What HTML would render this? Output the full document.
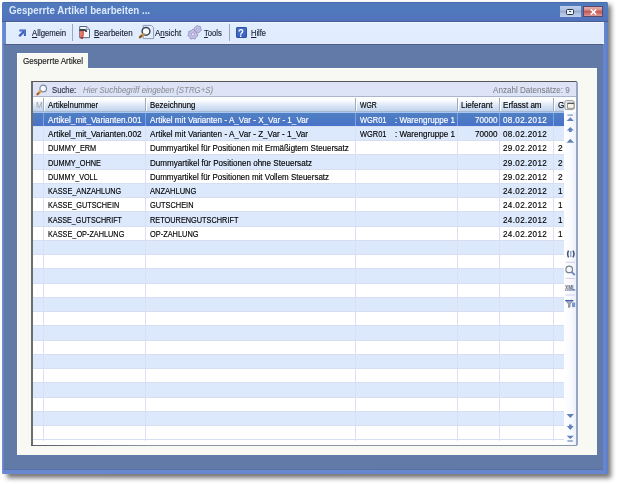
<!DOCTYPE html>
<html><head><meta charset="utf-8">
<style>
*{margin:0;padding:0;box-sizing:border-box}
html,body{width:618px;height:484px;overflow:hidden;background:#fff;font-family:"Liberation Sans",sans-serif}
.a{position:absolute}
.t{position:absolute;white-space:pre;line-height:12px}
svg{position:absolute;overflow:visible}
</style></head><body>
<div class="a" style="left:7px;top:5px;width:603.5px;height:472.5px;background:rgba(0,0,0,.55);filter:blur(2.5px)"></div>
<div class="a" style="left:2px;top:2px;width:605.5px;height:471.5px;background:linear-gradient(90deg,#7294da,#6888d0 1.5px,#6686d0 calc(100% - 4px),#6282cc calc(100% - 1px),#5a7ac0);border-radius:2px 2px 1px 1px"></div>
<div class="a" style="left:2px;top:2px;width:605.5px;height:20px;background:linear-gradient(#40609e 0,#507abc 1px,#5078bc 50%,#5272bc 18.5px,#44629e 19px,#485a8c 20px);border-radius:2px 2px 0 0"></div>
<div class="t" style="left:9.00px;top:4.16px;font-size:10.5px;color:#dce8fc;font-weight:bold;font-style:normal;transform:scaleX(0.925);transform-origin:0 0;">Gesperrte Artikel bearbeiten ...</div>
<div class="a" style="left:559.8px;top:5.9px;width:21.5px;height:11px;background:linear-gradient(#bcd0ec,#aec2e0 35%,#98acc8 50%,#aabede 65%,#bcd0ec);"></div>
<div class="a" style="left:566px;top:8.5px;width:8.2px;height:6px;background:#e8eef6;border:1.6px solid #28324a;border-radius:1.5px"></div>
<div class="a" style="left:568.5px;top:10.6px;width:2.5px;height:1.5px;background:#3a4660;"></div>
<div class="a" style="left:582.5px;top:5.9px;width:20.8px;height:11.2px;background:linear-gradient(#e6b4b4,#dc9a98 30%,#c65a56 50%,#cc6c68 65%,#e2aaaa);box-shadow:inset 0 0 0 1px #5a4a68"></div>
<svg style="left:589.5px;top:8.8px" width="7" height="6" viewBox="0 0 7 6"><path d="M0.8 0.5 L6.2 5.5 M6.2 0.5 L0.8 5.5" stroke="#fff" stroke-width="1.7"/></svg>
<div class="a" style="left:6px;top:22px;width:598px;height:22px;background:linear-gradient(#f6fbff 0,#e2eefe 1.5px,#e0ecfd);border-bottom:1px solid #fff"></div>
<div class="a" style="left:4.3px;top:44px;width:599.2px;height:425px;background:#627aa8;box-shadow:-1px 0 1px #6a84c0,0 1px 0 #5a6c9c"></div>
<div class="a" style="left:4.3px;top:44px;width:599.2px;height:1px;background:#4c5f8c;"></div>
<svg style="left:14px;top:24px" width="16" height="16" viewBox="0 0 16 16"><path d="M5.4 6.6 H10.9 V12" fill="none" stroke="#3558b8" stroke-width="2"/><path d="M10.4 7.1 L5.2 12.3" stroke="#3d5fc0" stroke-width="2.3"/><path d="M6 6.4 H10.6 V10.6" fill="none" stroke="#6e90e8" stroke-width="0.6"/></svg>
<div class="t" style="left:32.30px;top:27.02px;font-size:8.6px;color:#1a2030;font-weight:normal;font-style:normal;transform:scaleX(0.905);transform-origin:0 0;-webkit-text-stroke:0.15px currentColor;"><u>A</u>llgemein</div>
<div class="a" style="left:72px;top:24px;width:1px;height:17px;background:#9aa8bc;"></div>
<svg style="left:74px;top:22px" width="20" height="20" viewBox="0 0 20 20"><path d="M5.7 4.5 H12.8 L15.5 7.2 V15.7 H5.7 Z" fill="#f4f7fc" stroke="#56668a" stroke-width="1"/><path d="M12.6 4.7 V7.4 H15.3" fill="#dde6f2" stroke="#7a8aa6" stroke-width="0.8"/><path d="M5.4 8 H10.8 Q12.2 8 12.2 10" fill="none" stroke="#3c4452" stroke-width="1.8"/><path d="M5.6 9 H10 Q10.6 13 8.8 16.2 Q7.8 17 6.8 16 Q5 12.6 5.6 9 Z" fill="#d86a56"/><path d="M6.6 15.4 Q7.8 17 9 15.4" fill="none" stroke="#7a2418" stroke-width="1.3"/><path d="M7 10 V13.5" stroke="#f0a090" stroke-width="0.8"/></svg>
<div class="t" style="left:93.60px;top:27.02px;font-size:8.6px;color:#1a2030;font-weight:normal;font-style:normal;transform:scaleX(0.93);transform-origin:0 0;-webkit-text-stroke:0.15px currentColor;"><u>B</u>earbeiten</div>
<svg style="left:134px;top:22px" width="22" height="20" viewBox="0 0 22 20"><path d="M9.2 3.4 H17.3 L19.6 5.7 V16.6 H9.2 Z" fill="#e4eef9" stroke="#8c9cba" stroke-width="1"/><circle cx="12" cy="9.3" r="3.9" fill="#f4faff" stroke="#3e4654" stroke-width="1.5"/><circle cx="11.3" cy="8.6" r="1.6" fill="#fff"/><path d="M9.4 12.2 L6.2 15" stroke="#c8944c" stroke-width="2.8" stroke-linecap="round"/><path d="M7.4 14 L5.9 15.3" stroke="#7a5430" stroke-width="1.8" stroke-linecap="round"/></svg>
<div class="t" style="left:155.20px;top:27.02px;font-size:8.6px;color:#1a2030;font-weight:normal;font-style:normal;transform:scaleX(0.93);transform-origin:0 0;-webkit-text-stroke:0.15px currentColor;">A<u>n</u>sicht</div>
<svg style="left:184px;top:22px" width="20" height="20" viewBox="0 0 20 20"><path d="M13.77,12.95 L13.53,14.02 L12.39,14.59 L11.81,15.31 L11.51,16.55 L10.52,17.03 L9.36,16.49 L8.44,16.49 L7.28,17.03 L6.29,16.55 L5.99,15.31 L5.41,14.59 L4.27,14.02 L4.03,12.95 L4.81,11.94 L5.01,11.04 L4.75,9.79 L5.44,8.94 L6.71,8.91 L7.54,8.51 L8.35,7.53 L9.45,7.53 L10.26,8.51 L11.09,8.91 L12.36,8.94 L13.05,9.79 L12.79,11.04 L12.99,11.94 Z" fill="#c4c0e6" stroke="#8c88bc" stroke-width="0.9" stroke-linejoin="round"/><circle cx="8.9" cy="12.4" r="1.6" fill="#eeeef8" stroke="#8884bc" stroke-width="0.7"/><path d="M17.37,7.67 L17.13,8.58 L16.20,9.04 L15.64,9.60 L15.18,10.53 L14.27,10.77 L13.41,10.20 L12.64,9.99 L11.61,10.06 L10.94,9.39 L11.01,8.36 L10.80,7.59 L10.23,6.73 L10.47,5.82 L11.40,5.36 L11.96,4.80 L12.42,3.87 L13.33,3.63 L14.19,4.20 L14.96,4.41 L15.99,4.34 L16.66,5.01 L16.59,6.04 L16.80,6.81 Z" fill="#ccc8ec" stroke="#8c88bc" stroke-width="0.9" stroke-linejoin="round"/><circle cx="13.8" cy="7.2" r="1.2" fill="#eeeef8" stroke="#8884bc" stroke-width="0.7"/></svg>
<div class="t" style="left:203.90px;top:27.02px;font-size:8.6px;color:#1a2030;font-weight:normal;font-style:normal;transform:scaleX(0.89);transform-origin:0 0;-webkit-text-stroke:0.15px currentColor;"><u>T</u>ools</div>
<div class="a" style="left:229px;top:24px;width:1px;height:17px;background:#9aa8bc;"></div>
<div class="a" style="left:235.5px;top:27px;width:11.5px;height:11px;background:linear-gradient(#4a70c8,#3a62c0);border-radius:2px;box-shadow:inset 0 0 0 1px #2a50a8"></div>
<div class="t" style="left:238.20px;top:27.54px;font-size:10px;color:#fff;font-weight:bold;font-style:normal;transform:scaleX(0.95);transform-origin:0 0;">?</div>
<div class="t" style="left:250.50px;top:27.02px;font-size:8.6px;color:#1a2030;font-weight:normal;font-style:normal;transform:scaleX(0.87);transform-origin:0 0;-webkit-text-stroke:0.15px currentColor;"><u>H</u>ilfe</div>
<div class="a" style="left:17px;top:53px;width:71px;height:16px;background:#f9f9f4;"></div>
<div class="a" style="left:17px;top:53px;width:71px;height:1px;background:#ffffff;"></div>
<div class="a" style="left:17px;top:53px;width:1px;height:16px;background:#ffffff;"></div>
<div class="t" style="left:22.80px;top:54.82px;font-size:8.6px;color:#202020;font-weight:normal;font-style:normal;transform:scaleX(0.94);transform-origin:0 0;-webkit-text-stroke:0.15px currentColor;">Gesperrte Artikel</div>
<div class="a" style="left:17px;top:68px;width:579.5px;height:386.7px;background:#f9f9f4;"></div>
<div class="a" style="left:88px;top:68px;width:508px;height:1px;background:#ffffff;"></div>
<div class="a" style="left:17px;top:68px;width:1px;height:386px;background:#ffffff;"></div>
<div class="a" style="left:31px;top:81px;width:546px;height:364.5px;background:#fff;border-left:2px solid #6d6d6d;border-top:1px solid #555;border-right:1px solid #8a9abc;border-bottom:1px solid #8a94ac"></div>
<div class="a" style="left:31px;top:444.5px;width:120px;height:1px;background:linear-gradient(90deg,#5a5e6a,#8a94ac);"></div>
<div class="a" style="left:33px;top:82px;width:543px;height:15px;background:linear-gradient(#dfe2f6,#dce4f6);border-bottom:1px solid #aab6cc"></div>
<svg style="left:34px;top:82px" width="14" height="14" viewBox="0 0 14 14"><circle cx="9.2" cy="6.5" r="3.3" fill="#f2f8ff" stroke="#7c8ca8" stroke-width="1.2"/><circle cx="8.6" cy="5.9" r="1.3" fill="#fff"/><path d="M6.6 9.1 L3.6 12.2" stroke="#d89850" stroke-width="2.6" stroke-linecap="round"/><path d="M4.6 11.2 L3.4 12.4" stroke="#9a5a38" stroke-width="1.6" stroke-linecap="round"/></svg>
<div class="t" style="left:52.00px;top:83.62px;font-size:8.6px;color:#303440;font-weight:normal;font-style:normal;transform:scaleX(0.9);transform-origin:0 0;-webkit-text-stroke:0.15px currentColor;">Suche:</div>
<div class="t" style="left:82.60px;top:83.69px;font-size:8.4px;color:#8a8e96;font-weight:normal;font-style:italic;transform:scaleX(0.94);transform-origin:0 0;-webkit-text-stroke:0.05px currentColor;">Hier Suchbegriff eingeben (STRG+S)</div>
<div class="t" style="left:493.20px;top:83.62px;font-size:8.6px;color:#7a7e86;font-weight:normal;font-style:normal;transform:scaleX(0.94);transform-origin:0 0;-webkit-text-stroke:0.05px currentColor;">Anzahl Datensätze: 9</div>
<div class="a" style="left:33px;top:97px;width:531px;height:15px;background:linear-gradient(#ffffff,#fbfcff 25%,#dfe9f7 55%,#c0d4ee);border-bottom:1px solid #a6b6ce"></div>
<div class="t" style="left:35.60px;top:99.02px;font-size:8.6px;color:#a0a4aa;font-weight:normal;font-style:normal;transform:scaleX(0.94);transform-origin:0 0;">M</div>
<div class="a" style="left:43px;top:98px;width:1.2px;height:13px;background:#a0acbc;box-shadow:1px 0 0 #fff"></div>
<div class="a" style="left:145px;top:98px;width:1.2px;height:13px;background:#a0acbc;box-shadow:1px 0 0 #fff"></div>
<div class="a" style="left:355px;top:98px;width:1.2px;height:13px;background:#a0acbc;box-shadow:1px 0 0 #fff"></div>
<div class="a" style="left:456.5px;top:98px;width:1.2px;height:13px;background:#a0acbc;box-shadow:1px 0 0 #fff"></div>
<div class="a" style="left:498.5px;top:98px;width:1.2px;height:13px;background:#a0acbc;box-shadow:1px 0 0 #fff"></div>
<div class="a" style="left:552.5px;top:98px;width:1.2px;height:13px;background:#a0acbc;box-shadow:1px 0 0 #fff"></div>
<div class="t" style="left:47.80px;top:99.02px;font-size:8.6px;color:#000;font-weight:normal;font-style:normal;transform:scaleX(0.904);transform-origin:0 0;-webkit-text-stroke:0.15px currentColor;">Artikelnummer</div>
<div class="t" style="left:149.70px;top:99.02px;font-size:8.6px;color:#000;font-weight:normal;font-style:normal;transform:scaleX(0.913);transform-origin:0 0;-webkit-text-stroke:0.15px currentColor;">Bezeichnung</div>
<div class="t" style="left:359.70px;top:99.02px;font-size:8.6px;color:#000;font-weight:normal;font-style:normal;transform:scaleX(0.8);transform-origin:0 0;-webkit-text-stroke:0.15px currentColor;">WGR</div>
<div class="t" style="left:461.40px;top:99.02px;font-size:8.6px;color:#000;font-weight:normal;font-style:normal;transform:scaleX(0.94);transform-origin:0 0;-webkit-text-stroke:0.15px currentColor;">Lieferant</div>
<div class="t" style="left:503.40px;top:99.02px;font-size:8.6px;color:#000;font-weight:normal;font-style:normal;transform:scaleX(0.94);transform-origin:0 0;-webkit-text-stroke:0.15px currentColor;">Erfasst am</div>
<div class="t" style="left:557.80px;top:99.02px;font-size:8.6px;color:#000;font-weight:normal;font-style:normal;transform:scaleX(0.94);transform-origin:0 0;-webkit-text-stroke:0.15px currentColor;">G</div>
<svg style="left:562px;top:98px" width="16" height="14" viewBox="0 0 16 14"><rect x="2.8" y="2.6" width="9.2" height="9" rx="1.6" fill="#eceef2" stroke="#8c8c8c" stroke-width="0.9"/><rect x="5.6" y="5" width="6.4" height="5.2" fill="#faf6ea" stroke="#7c7c7c" stroke-width="0.8"/><path d="M5.6 5.5 H12" stroke="#5a5a5a" stroke-width="1.1"/></svg>
<div class="a" style="left:33px;top:112.6px;width:531px;height:14.25px;background:linear-gradient(#5080c2,#4872c8);border-bottom:1px solid #d8def2"></div>
<div class="a" style="left:33px;top:126.85px;width:531px;height:14.25px;background:#dce9fd;border-bottom:1px solid #d8def2"></div>
<div class="a" style="left:33px;top:141.1px;width:531px;height:14.25px;background:#ffffff;border-bottom:1px solid #d8def2"></div>
<div class="a" style="left:33px;top:155.35px;width:531px;height:14.25px;background:#dce9fd;border-bottom:1px solid #d8def2"></div>
<div class="a" style="left:33px;top:169.6px;width:531px;height:14.25px;background:#ffffff;border-bottom:1px solid #d8def2"></div>
<div class="a" style="left:33px;top:183.85px;width:531px;height:14.25px;background:#dce9fd;border-bottom:1px solid #d8def2"></div>
<div class="a" style="left:33px;top:198.1px;width:531px;height:14.25px;background:#ffffff;border-bottom:1px solid #d8def2"></div>
<div class="a" style="left:33px;top:212.35px;width:531px;height:14.25px;background:#dce9fd;border-bottom:1px solid #d8def2"></div>
<div class="a" style="left:33px;top:226.6px;width:531px;height:14.25px;background:#ffffff;border-bottom:1px solid #d8def2"></div>
<div class="a" style="left:33px;top:240.85px;width:531px;height:14.25px;background:#dce9fd;border-bottom:1px solid #d8def2"></div>
<div class="a" style="left:33px;top:255.1px;width:531px;height:14.25px;background:#ffffff;border-bottom:1px solid #d8def2"></div>
<div class="a" style="left:33px;top:269.35px;width:531px;height:14.25px;background:#dce9fd;border-bottom:1px solid #d8def2"></div>
<div class="a" style="left:33px;top:283.6px;width:531px;height:14.25px;background:#ffffff;border-bottom:1px solid #d8def2"></div>
<div class="a" style="left:33px;top:297.85px;width:531px;height:14.25px;background:#dce9fd;border-bottom:1px solid #d8def2"></div>
<div class="a" style="left:33px;top:312.1px;width:531px;height:14.25px;background:#ffffff;border-bottom:1px solid #d8def2"></div>
<div class="a" style="left:33px;top:326.35px;width:531px;height:14.25px;background:#dce9fd;border-bottom:1px solid #d8def2"></div>
<div class="a" style="left:33px;top:340.6px;width:531px;height:14.25px;background:#ffffff;border-bottom:1px solid #d8def2"></div>
<div class="a" style="left:33px;top:354.85px;width:531px;height:14.25px;background:#dce9fd;border-bottom:1px solid #d8def2"></div>
<div class="a" style="left:33px;top:369.1px;width:531px;height:14.25px;background:#ffffff;border-bottom:1px solid #d8def2"></div>
<div class="a" style="left:33px;top:383.35px;width:531px;height:14.25px;background:#dce9fd;border-bottom:1px solid #d8def2"></div>
<div class="a" style="left:33px;top:397.6px;width:531px;height:14.25px;background:#ffffff;border-bottom:1px solid #d8def2"></div>
<div class="a" style="left:33px;top:411.85px;width:531px;height:14.25px;background:#dce9fd;border-bottom:1px solid #d8def2"></div>
<div class="a" style="left:33px;top:426.1px;width:531px;height:14.25px;background:#ffffff;border-bottom:1px solid #d8def2"></div>
<div class="a" style="left:43.3px;top:112px;width:1px;height:329px;background:#dcdef4;"></div>
<div class="a" style="left:145px;top:112px;width:1px;height:329px;background:#dcdef4;"></div>
<div class="a" style="left:355px;top:112px;width:1px;height:329px;background:#dcdef4;"></div>
<div class="a" style="left:456.5px;top:112px;width:1px;height:329px;background:#dcdef4;"></div>
<div class="a" style="left:498.5px;top:112px;width:1px;height:329px;background:#dcdef4;"></div>
<div class="a" style="left:552.5px;top:112px;width:1px;height:329px;background:#dcdef4;"></div>
<div class="a" style="left:33px;top:112px;width:531px;height:1px;background:#a8c6f4;"></div>
<div class="a" style="left:43.3px;top:113px;width:1px;height:12.5px;background:#7ea4e6;"></div>
<div class="a" style="left:145px;top:113px;width:1px;height:12.5px;background:#7ea4e6;"></div>
<div class="a" style="left:355px;top:113px;width:1px;height:12.5px;background:#7ea4e6;"></div>
<div class="a" style="left:456.5px;top:113px;width:1px;height:12.5px;background:#7ea4e6;"></div>
<div class="a" style="left:498.5px;top:113px;width:1px;height:12.5px;background:#7ea4e6;"></div>
<div class="a" style="left:552.5px;top:113px;width:1px;height:12.5px;background:#7ea4e6;"></div>
<div class="t" style="left:48.00px;top:113.90px;font-size:8.6px;color:#fff;font-weight:normal;font-style:normal;transform:scaleX(0.957);transform-origin:0 0;-webkit-text-stroke:0.15px currentColor;">Artikel_mit_Varianten.001</div>
<div class="t" style="left:149.60px;top:113.90px;font-size:8.6px;color:#fff;font-weight:normal;font-style:normal;transform:scaleX(0.946);transform-origin:0 0;-webkit-text-stroke:0.15px currentColor;">Artikel mit Varianten - A_Var - X_Var - 1_Var</div>
<div class="t" style="left:359.80px;top:113.90px;font-size:8.6px;color:#fff;font-weight:normal;font-style:normal;transform:scaleX(0.865);transform-origin:0 0;-webkit-text-stroke:0.15px currentColor;">WGR01</div>
<div class="t" style="left:395.00px;top:113.90px;font-size:8.6px;color:#fff;font-weight:normal;font-style:normal;transform:scaleX(0.94);transform-origin:0 0;-webkit-text-stroke:0.15px currentColor;">: Warengruppe 1</div>
<div class="t" style="left:475.30px;top:113.90px;font-size:8.6px;color:#fff;font-weight:normal;font-style:normal;transform:scaleX(0.94);transform-origin:0 0;-webkit-text-stroke:0.15px currentColor;">70000</div>
<div class="t" style="left:503.30px;top:113.90px;font-size:8.6px;color:#fff;font-weight:normal;font-style:normal;transform:scaleX(0.94);transform-origin:0 0;-webkit-text-stroke:0.15px currentColor;letter-spacing:0.4px;">08.02.2012</div>
<div class="t" style="left:48.00px;top:128.15px;font-size:8.6px;color:#000;font-weight:normal;font-style:normal;transform:scaleX(0.957);transform-origin:0 0;-webkit-text-stroke:0.15px currentColor;">Artikel_mit_Varianten.002</div>
<div class="t" style="left:149.60px;top:128.15px;font-size:8.6px;color:#000;font-weight:normal;font-style:normal;transform:scaleX(0.946);transform-origin:0 0;-webkit-text-stroke:0.15px currentColor;">Artikel mit Varianten - A_Var - Z_Var - 1_Var</div>
<div class="t" style="left:359.80px;top:128.15px;font-size:8.6px;color:#000;font-weight:normal;font-style:normal;transform:scaleX(0.865);transform-origin:0 0;-webkit-text-stroke:0.15px currentColor;">WGR01</div>
<div class="t" style="left:395.00px;top:128.15px;font-size:8.6px;color:#000;font-weight:normal;font-style:normal;transform:scaleX(0.94);transform-origin:0 0;-webkit-text-stroke:0.15px currentColor;">: Warengruppe 1</div>
<div class="t" style="left:475.30px;top:128.15px;font-size:8.6px;color:#000;font-weight:normal;font-style:normal;transform:scaleX(0.94);transform-origin:0 0;-webkit-text-stroke:0.15px currentColor;">70000</div>
<div class="t" style="left:503.30px;top:128.15px;font-size:8.6px;color:#000;font-weight:normal;font-style:normal;transform:scaleX(0.94);transform-origin:0 0;-webkit-text-stroke:0.15px currentColor;letter-spacing:0.4px;">08.02.2012</div>
<div class="t" style="left:48.00px;top:142.40px;font-size:8.6px;color:#000;font-weight:normal;font-style:normal;transform:scaleX(0.856);transform-origin:0 0;-webkit-text-stroke:0.15px currentColor;">DUMMY_ERM</div>
<div class="t" style="left:149.60px;top:142.40px;font-size:8.6px;color:#000;font-weight:normal;font-style:normal;transform:scaleX(0.929);transform-origin:0 0;-webkit-text-stroke:0.15px currentColor;">Dummyartikel für Positionen mit Ermäßigtem Steuersatz</div>
<div class="t" style="left:503.30px;top:142.40px;font-size:8.6px;color:#000;font-weight:normal;font-style:normal;transform:scaleX(0.94);transform-origin:0 0;-webkit-text-stroke:0.15px currentColor;letter-spacing:0.4px;">29.02.2012</div>
<div class="a" style="left:553.5px;top:141.10px;width:9.7px;height:14px;overflow:hidden"><div class="t" style="left:4.80px;top:1.30px;font-size:8.6px;color:#000;font-weight:normal;font-style:normal;transform:scaleX(0.94);transform-origin:0 0;-webkit-text-stroke:0.15px currentColor;">29</div></div>
<div class="t" style="left:48.00px;top:156.65px;font-size:8.6px;color:#000;font-weight:normal;font-style:normal;transform:scaleX(0.854);transform-origin:0 0;-webkit-text-stroke:0.15px currentColor;">DUMMY_OHNE</div>
<div class="t" style="left:149.60px;top:156.65px;font-size:8.6px;color:#000;font-weight:normal;font-style:normal;transform:scaleX(0.939);transform-origin:0 0;-webkit-text-stroke:0.15px currentColor;">Dummyartikel für Positionen ohne Steuersatz</div>
<div class="t" style="left:503.30px;top:156.65px;font-size:8.6px;color:#000;font-weight:normal;font-style:normal;transform:scaleX(0.94);transform-origin:0 0;-webkit-text-stroke:0.15px currentColor;letter-spacing:0.4px;">29.02.2012</div>
<div class="a" style="left:553.5px;top:155.35px;width:9.7px;height:14px;overflow:hidden"><div class="t" style="left:4.80px;top:1.30px;font-size:8.6px;color:#000;font-weight:normal;font-style:normal;transform:scaleX(0.94);transform-origin:0 0;-webkit-text-stroke:0.15px currentColor;">29</div></div>
<div class="t" style="left:48.00px;top:170.90px;font-size:8.6px;color:#000;font-weight:normal;font-style:normal;transform:scaleX(0.838);transform-origin:0 0;-webkit-text-stroke:0.15px currentColor;">DUMMY_VOLL</div>
<div class="t" style="left:149.60px;top:170.90px;font-size:8.6px;color:#000;font-weight:normal;font-style:normal;transform:scaleX(0.928);transform-origin:0 0;-webkit-text-stroke:0.15px currentColor;">Dummyartikel für Positionen mit Vollem Steuersatz</div>
<div class="t" style="left:503.30px;top:170.90px;font-size:8.6px;color:#000;font-weight:normal;font-style:normal;transform:scaleX(0.94);transform-origin:0 0;-webkit-text-stroke:0.15px currentColor;letter-spacing:0.4px;">29.02.2012</div>
<div class="a" style="left:553.5px;top:169.60px;width:9.7px;height:14px;overflow:hidden"><div class="t" style="left:4.80px;top:1.30px;font-size:8.6px;color:#000;font-weight:normal;font-style:normal;transform:scaleX(0.94);transform-origin:0 0;-webkit-text-stroke:0.15px currentColor;">29</div></div>
<div class="t" style="left:48.00px;top:185.15px;font-size:8.6px;color:#000;font-weight:normal;font-style:normal;transform:scaleX(0.847);transform-origin:0 0;-webkit-text-stroke:0.15px currentColor;">KASSE_ANZAHLUNG</div>
<div class="t" style="left:149.60px;top:185.15px;font-size:8.6px;color:#000;font-weight:normal;font-style:normal;transform:scaleX(0.875);transform-origin:0 0;-webkit-text-stroke:0.15px currentColor;">ANZAHLUNG</div>
<div class="t" style="left:503.30px;top:185.15px;font-size:8.6px;color:#000;font-weight:normal;font-style:normal;transform:scaleX(0.94);transform-origin:0 0;-webkit-text-stroke:0.15px currentColor;letter-spacing:0.4px;">24.02.2012</div>
<div class="a" style="left:553.5px;top:183.85px;width:9.7px;height:14px;overflow:hidden"><div class="t" style="left:4.80px;top:1.30px;font-size:8.6px;color:#000;font-weight:normal;font-style:normal;transform:scaleX(0.94);transform-origin:0 0;-webkit-text-stroke:0.15px currentColor;">1</div></div>
<div class="t" style="left:48.00px;top:199.40px;font-size:8.6px;color:#000;font-weight:normal;font-style:normal;transform:scaleX(0.847);transform-origin:0 0;-webkit-text-stroke:0.15px currentColor;">KASSE_GUTSCHEIN</div>
<div class="t" style="left:149.60px;top:199.40px;font-size:8.6px;color:#000;font-weight:normal;font-style:normal;transform:scaleX(0.859);transform-origin:0 0;-webkit-text-stroke:0.15px currentColor;">GUTSCHEIN</div>
<div class="t" style="left:503.30px;top:199.40px;font-size:8.6px;color:#000;font-weight:normal;font-style:normal;transform:scaleX(0.94);transform-origin:0 0;-webkit-text-stroke:0.15px currentColor;letter-spacing:0.4px;">24.02.2012</div>
<div class="a" style="left:553.5px;top:198.10px;width:9.7px;height:14px;overflow:hidden"><div class="t" style="left:4.80px;top:1.30px;font-size:8.6px;color:#000;font-weight:normal;font-style:normal;transform:scaleX(0.94);transform-origin:0 0;-webkit-text-stroke:0.15px currentColor;">1</div></div>
<div class="t" style="left:48.00px;top:213.65px;font-size:8.6px;color:#000;font-weight:normal;font-style:normal;transform:scaleX(0.833);transform-origin:0 0;-webkit-text-stroke:0.15px currentColor;">KASSE_GUTSCHRIFT</div>
<div class="t" style="left:149.60px;top:213.65px;font-size:8.6px;color:#000;font-weight:normal;font-style:normal;transform:scaleX(0.855);transform-origin:0 0;-webkit-text-stroke:0.15px currentColor;">RETOURENGUTSCHRIFT</div>
<div class="t" style="left:503.30px;top:213.65px;font-size:8.6px;color:#000;font-weight:normal;font-style:normal;transform:scaleX(0.94);transform-origin:0 0;-webkit-text-stroke:0.15px currentColor;letter-spacing:0.4px;">24.02.2012</div>
<div class="a" style="left:553.5px;top:212.35px;width:9.7px;height:14px;overflow:hidden"><div class="t" style="left:4.80px;top:1.30px;font-size:8.6px;color:#000;font-weight:normal;font-style:normal;transform:scaleX(0.94);transform-origin:0 0;-webkit-text-stroke:0.15px currentColor;">1</div></div>
<div class="t" style="left:48.00px;top:227.90px;font-size:8.6px;color:#000;font-weight:normal;font-style:normal;transform:scaleX(0.85);transform-origin:0 0;-webkit-text-stroke:0.15px currentColor;">KASSE_OP-ZAHLUNG</div>
<div class="t" style="left:149.60px;top:227.90px;font-size:8.6px;color:#000;font-weight:normal;font-style:normal;transform:scaleX(0.861);transform-origin:0 0;-webkit-text-stroke:0.15px currentColor;">OP-ZAHLUNG</div>
<div class="t" style="left:503.30px;top:227.90px;font-size:8.6px;color:#000;font-weight:normal;font-style:normal;transform:scaleX(0.94);transform-origin:0 0;-webkit-text-stroke:0.15px currentColor;letter-spacing:0.4px;">24.02.2012</div>
<div class="a" style="left:553.5px;top:226.60px;width:9.7px;height:14px;overflow:hidden"><div class="t" style="left:4.80px;top:1.30px;font-size:8.6px;color:#000;font-weight:normal;font-style:normal;transform:scaleX(0.94);transform-origin:0 0;-webkit-text-stroke:0.15px currentColor;">1</div></div>
<div class="a" style="left:564px;top:112px;width:12.5px;height:332.5px;background:linear-gradient(90deg,#fff,#f8f9fe 55%,#eaeef9);"></div>
<div class="a" style="left:576px;top:82px;width:1.5px;height:363px;background:#98a6c6;"></div>
<svg style="left:562px;top:110px" width="18" height="336" viewBox="0 0 18 336"><path d="M5.40 5.10 H10.90" stroke="#6282bc" stroke-width="1"/><path d="M8.30 7.30 L11.90 11.00 L4.70 11.00 Z" fill="#6282bc"/><path d="M8.30 16.90 L11.80 20.50 L9.60 20.50 L9.60 21.90 L7.00 21.90 L7.00 20.50 L4.80 20.50 Z" fill="#6282bc"/><path d="M8.30 28.80 L12.00 32.70 L4.60 32.70 Z" fill="#6282bc"/><path d="M4.60 304.00 L12.00 304.00 L8.30 307.90 Z" fill="#6282bc"/><path d="M7.00 314.50 L9.60 314.50 L9.60 316.00 L11.80 316.00 L8.30 319.90 L4.80 316.00 L7.00 316.00 Z" fill="#6282bc"/><path d="M4.70 325.80 L11.90 325.80 L8.30 329.10 Z" fill="#6282bc"/><path d="M5.40 331.00 H10.90" stroke="#6a88bc" stroke-width="1.2"/><path d="M6.60 140.70 Q4.70 144.00 6.60 147.30" fill="none" stroke="#4a5878" stroke-width="1.6"/><path d="M11.00 140.70 Q12.90 144.00 11.00 147.30" fill="none" stroke="#4a5878" stroke-width="1.6"/><path d="M8.80 141.00 V147.00" stroke="#7a98d0" stroke-width="1.2"/><path d="M3.50 152.30 H13.00" stroke="#cac4e4" stroke-width="0.8"/><path d="M3.50 168.40 H13.00" stroke="#cac4e4" stroke-width="0.8"/><path d="M3.50 185.00 H13.00" stroke="#cac4e4" stroke-width="0.8"/><circle cx="7.20" cy="159.40" r="3.3" fill="#f4f6fa" stroke="#7a8090" stroke-width="1.2"/><path d="M9.60 161.90 L12.80 165.20" stroke="#6a88c8" stroke-width="1.9"/><text x="3" y="179.80" font-family="Liberation Sans" font-size="6.4" font-weight="bold" fill="#5c6880" textLength="10" lengthAdjust="spacingAndGlyphs">XML</text><path d="M3.00 180.50 H13.50" stroke="#8aa0c8" stroke-width="0.8"/><path d="M3.50 190.40 H11.10 L8.00 194.00 V197.00 L6.60 197.40 V194.00 Z" fill="#a4acbc" stroke="#6c7890" stroke-width="0.7"/><path d="M3.30 190.60 H11.30" stroke="#3a5ab0" stroke-width="1"/><rect x="10" y="192.5" width="3.2" height="4.6" fill="#7a98cc"/></svg>
</body></html>
